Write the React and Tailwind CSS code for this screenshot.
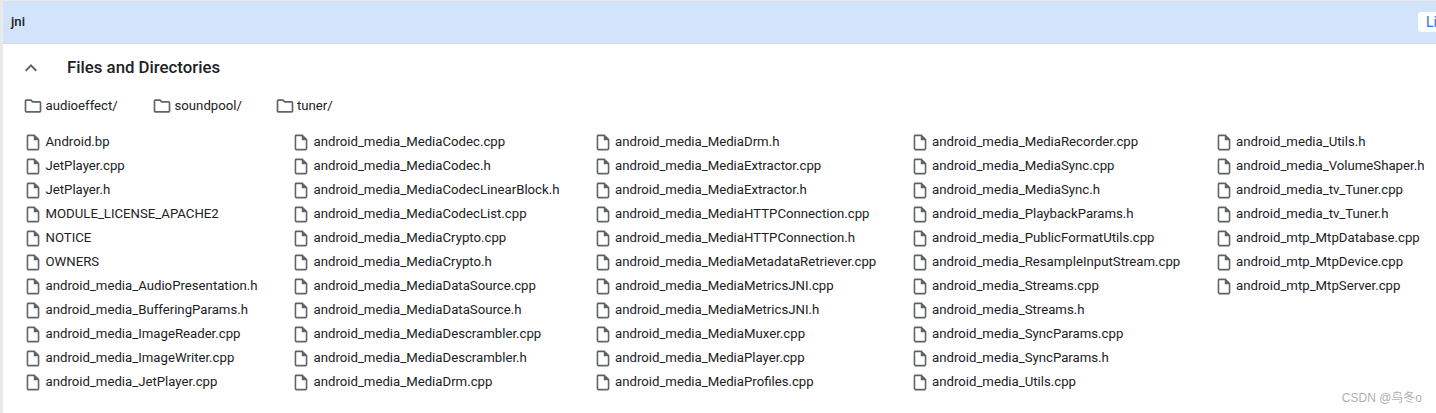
const FOLDERS = ["audioeffect/", "soundpool/", "tuner/"];

const COLUMNS = [
  {
    width: "w-[268px]",
    files: ["Android.bp", "JetPlayer.cpp", "JetPlayer.h", "MODULE_LICENSE_APACHE2", "NOTICE", "OWNERS", "android_media_AudioPresentation.h", "android_media_BufferingParams.h", "android_media_ImageReader.cpp", "android_media_ImageWriter.cpp", "android_media_JetPlayer.cpp"],
  },
  {
    width: "w-[301.5px]",
    files: ["android_media_MediaCodec.cpp", "android_media_MediaCodec.h", "android_media_MediaCodecLinearBlock.h", "android_media_MediaCodecList.cpp", "android_media_MediaCrypto.cpp", "android_media_MediaCrypto.h", "android_media_MediaDataSource.cpp", "android_media_MediaDataSource.h", "android_media_MediaDescrambler.cpp", "android_media_MediaDescrambler.h", "android_media_MediaDrm.cpp"],
  },
  {
    width: "w-[317px]",
    files: ["android_media_MediaDrm.h", "android_media_MediaExtractor.cpp", "android_media_MediaExtractor.h", "android_media_MediaHTTPConnection.cpp", "android_media_MediaHTTPConnection.h", "android_media_MediaMetadataRetriever.cpp", "android_media_MediaMetricsJNI.cpp", "android_media_MediaMetricsJNI.h", "android_media_MediaMuxer.cpp", "android_media_MediaPlayer.cpp", "android_media_MediaProfiles.cpp"],
  },
  {
    width: "w-[304px]",
    files: ["android_media_MediaRecorder.cpp", "android_media_MediaSync.cpp", "android_media_MediaSync.h", "android_media_PlaybackParams.h", "android_media_PublicFormatUtils.cpp", "android_media_ResampleInputStream.cpp", "android_media_Streams.cpp", "android_media_Streams.h", "android_media_SyncParams.cpp", "android_media_SyncParams.h", "android_media_Utils.cpp"],
  },
  {
    width: "w-[220px]",
    files: ["android_media_Utils.h", "android_media_VolumeShaper.h", "android_media_tv_Tuner.cpp", "android_media_tv_Tuner.h", "android_mtp_MtpDatabase.cpp", "android_mtp_MtpDevice.cpp", "android_mtp_MtpServer.cpp"],
  },
];

const FolderIcon = () => (
  <svg viewBox="0 0 24 24" fill="#5f6368" className="w-[20px] h-[20px] shrink-0">
    <path d="M9.17 6l2 2H20v10H4V6h5.17M10 4H4c-1.1 0-1.99.9-1.99 2L2 18c0 1.1.9 2 2 2h16c1.1 0 2-.9 2-2V8c0-1.1-.9-2-2-2h-8l-2-2z" />
  </svg>
);

const FileIcon = () => (
  <svg viewBox="0 0 24 24" fill="#5f6368" className="w-[20px] h-[19px] shrink-0">
    <path d="M14 2H6c-1.1 0-1.99.9-1.99 2L4 20c0 1.1.89 2 1.99 2H18c1.1 0 2-.9 2-2V8l-6-6zM6 20V4h7v5h5v11H6z" />
  </svg>
);

const ChevronUp = () => (
  <svg viewBox="0 0 24 24" fill="#5f6368" className="w-[24px] h-[24px] shrink-0">
    <path d="M12 8l-6 6 1.41 1.41L12 10.83l4.59 4.58L18 14z" />
  </svg>
);

export default function App() {
  return (
    <div className="relative w-[1436px] h-[413px] overflow-hidden bg-[#e8eaed] pt-px pl-[3px] font-['Roboto',sans-serif] text-[#202124]">
      <div className="h-[42px] bg-[#d2e3fc] flex items-center justify-between pl-2 overflow-hidden">
        <span className="text-[13.2px] font-medium">jni</span>
        <div className="w-[18px] h-[20px] bg-white rounded-l-[3px] flex items-center pl-2 text-[14px] text-[#1a73e8] shrink-0">
          Li
        </div>
      </div>
      <div className="h-px bg-[#dadce0]" />
      <div className="h-[369px] bg-white pl-[20px]">
        <div className="flex items-center h-[48px] -ml-[4px]">
          <ChevronUp />
          <h2 className="ml-[24px] text-[16.8px] font-medium">Files and Directories</h2>
        </div>
        <div className="flex h-[24px] mt-[2px] items-center">
          {FOLDERS.map((name, i) => (
            <div key={name} className={`flex items-center gap-[2.5px] text-[13.2px] ${i === 0 ? "w-[129px]" : "w-[122.5px]"}`}>
              <FolderIcon />
              <span>{name}</span>
            </div>
          ))}
        </div>
        <div className="flex mt-[12px]">
          {COLUMNS.map((col) => (
            <div key={col.files[0]} className={`${col.width} shrink-0 flex flex-col`}>
              {col.files.map((name) => (
                <div key={name} className="flex items-center h-[24px] gap-[2.5px] text-[13.2px] whitespace-nowrap">
                  <FileIcon />
                  <span>{name}</span>
                </div>
              ))}
            </div>
          ))}
        </div>
      </div>
      <span className="absolute right-[14px] bottom-[6px] text-[12px] text-[#b0b0b0] font-['Liberation_Sans','Noto_Sans_CJK_SC',sans-serif]">
        CSDN @鸟冬o
      </span>
    </div>
  );
}
